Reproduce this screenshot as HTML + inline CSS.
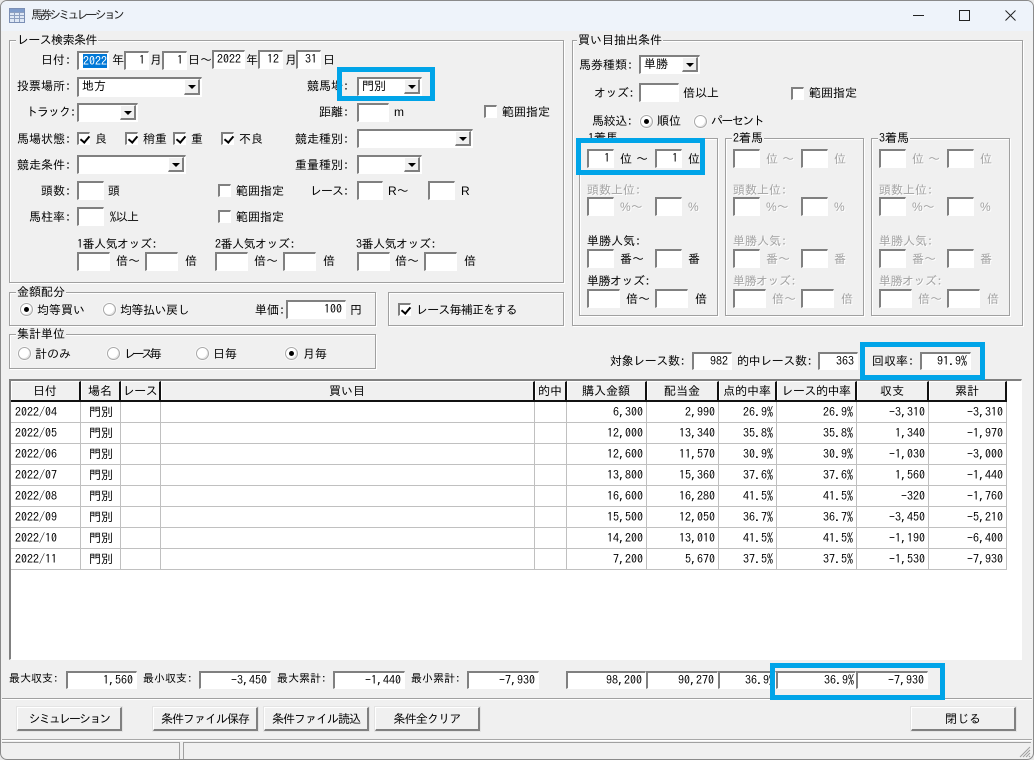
<!DOCTYPE html>
<html lang="ja"><head><meta charset="utf-8"><title>馬券シミュレーション</title>
<style>
html,body{margin:0;padding:0;width:1034px;height:760px;overflow:hidden;background:#e8e8e8}
*{box-sizing:border-box}
#w{position:absolute;left:0;top:0;width:1034px;height:760px;background:#f0f0f0;font:12px/14px "IPAGothic","Noto Sans CJK JP",sans-serif;color:#000;border:1px solid #8a8a8a;border-width:1px 1px 1px 1px;border-radius:7px 7px 7px 7px;overflow:hidden}
#in{position:absolute;left:-1px;top:-1px;width:1034px;height:760px}
#in div,#in span.t{position:absolute}
.t{white-space:nowrap;height:14px}
.d{color:#a2a2a2;text-shadow:1px 1px 0 #fff}
.n{letter-spacing:-.6px}
.f{font-family:"Liberation Sans",sans-serif}
.g{border:1px solid #a0a0a0;box-shadow:inset 1px 1px 0 #fff,1px 1px 0 #fff}
.l{background:#f0f0f0;padding:0 1px;white-space:nowrap;height:14px;line-height:14px}
.i{background:#fff;border-style:solid;border-width:2px 1px 1px 2px;border-color:#808080 #fff #fff #808080;text-align:right;padding-right:3px;line-height:14px;white-space:nowrap;overflow:hidden}
.c{background:#fff;border-style:solid;border-width:2px 1px 1px 2px;border-color:#808080 #fff #fff #808080;padding-left:3px;line-height:15px;white-space:nowrap}
.c i{position:absolute;right:1px;top:0;bottom:1px;width:16px;background:#f0f0f0;border-style:solid;border-width:1px 2px 2px 1px;border-color:#fff #808080 #808080 #fff}
.c i::after{content:"";position:absolute;left:3px;top:5px;border:4px solid transparent;border-top:4px solid #000;border-bottom:0}
.k{width:13px;height:13px;background:#fff;border-style:solid;border-width:2px 1px 1px 2px;border-color:#808080 #fff #fff #808080}
.k.x::after{content:"";position:absolute;left:3px;top:0;width:4px;height:7px;border-right:2px solid #000;border-bottom:2px solid #000;transform:rotate(40deg)}
.r{width:13px;height:13px;border-radius:50%;background:#fff;border:1px solid #a8a8a8;box-shadow:-1px -1px 0 #e4e4e4 inset,0 0 0 1px #f8f8f8}
.r.x::after{content:"";position:absolute;left:3px;top:3px;width:5px;height:5px;border-radius:50%;background:#000}
.b{background:#f0f0f0;border-style:solid;border-width:1px 2px 2px 1px;border-color:#fff #808080 #808080 #fff;box-shadow:0 0 0 1px #e4e4e4;text-align:center;line-height:22px;white-space:nowrap}
.h{border:5px solid #00a4e8;background:transparent;z-index:5}
table{position:absolute;left:11px;top:381px;border-collapse:separate;border-spacing:0;table-layout:fixed;width:995px;background:#fff}
th{height:21px;padding:0;font-weight:normal;background:#f0f0f0;border-right:2px solid #111;border-bottom:2px solid #111;border-top:1px solid #fff;white-space:nowrap;overflow:hidden;text-align:center;box-shadow:inset 1px 0 0 #fff}
td{height:21px;padding:0 3px 0 4px;border-right:1px solid #c0c0c0;border-bottom:1px solid #c0c0c0;text-align:right;white-space:nowrap;overflow:hidden}
td:nth-child(1){text-align:left}
td:nth-child(2){text-align:center}
</style></head><body>
<div id="w"><div id="in">
<div style="left:0;top:0;width:1034px;height:31px;background:#eef3fa"></div>
<svg style="position:absolute;left:9px;top:8px" width="16" height="15" viewBox="0 0 16 15"><rect x=".5" y=".5" width="15" height="14" fill="#dfe8f5" stroke="#7b8fb5"/><rect x="1" y="1" width="14" height="3" fill="#7f9ccb"/><path d="M1 4.500H15M1 7.500H15M1 10.500H15M5.500 4V14M10.500 4V14" stroke="#8d9fc0" fill="none"/></svg>
<span class="t" style="left:31px;top:8px;color:#222;letter-spacing:-2.900px">馬券シミュレーション</span>
<svg style="position:absolute;left:905px;top:5px" width="120" height="20" viewBox="0 0 120 20"><path d="M8 10.500H19M54.500 5.500H64.500V15.500H54.500ZM100.500 5.500L110.500 15.500M110.500 5.500L100.500 15.500" stroke="#222" fill="none"/></svg>

<div class="g" style="left:9px;top:40px;width:555px;height:243px"></div>
<div class="l n" style="left:16px;top:33px;">レース検索条件</div>
<span class="t" style="left:41px;top:53px">日付:</span>
<div class="i" style="left:77px;top:51px;width:32px;height:19px;padding-right:0"><span style="background:#0078d7;color:#fff;position:absolute;left:4px;top:1px;width:24px;height:14px;overflow:hidden">2022</span></div>
<span class="t" style="left:112px;top:53px">年</span>
<div class="i" style="left:124px;top:51px;width:25px;height:19px">1</div>
<span class="t" style="left:150px;top:53px">月</span>
<div class="i" style="left:162px;top:51px;width:25px;height:19px">1</div>
<span class="t" style="left:188px;top:53px">日～</span>
<div class="i" style="left:212px;top:50px;width:33px;height:19px">2022</div>
<span class="t" style="left:246px;top:53px">年</span>
<div class="i" style="left:258px;top:50px;width:25px;height:19px">12</div>
<span class="t" style="left:285px;top:53px">月</span>
<div class="i" style="left:296px;top:50px;width:25px;height:19px">31</div>
<span class="t" style="left:323px;top:53px">日</span>

<span class="t" style="left:17px;top:79px">投票場所:</span>
<div class="c" style="left:77px;top:77px;width:125px;height:20px">地方<i></i></div>
<span class="t" style="left:307px;top:79px">競馬場:</span>
<div class="c" style="left:357px;top:77px;width:65px;height:19px">門別<i></i></div>
<span class="t" style="left:26px;top:105px;letter-spacing:-1px">トラック:</span>
<div class="c" style="left:77px;top:103px;width:61px;height:19px"><i></i></div>
<span class="t" style="left:319px;top:105px">距離:</span>
<div class="i" style="left:357px;top:103px;width:32px;height:19px"></div>
<span class="t f" style="left:394px;top:105px">m</span>
<div class="k" style="left:484px;top:105px"></div>
<span class="t" style="left:502px;top:105px">範囲指定</span>

<span class="t" style="left:17px;top:132px">馬場状態:</span>
<div class="k x" style="left:77px;top:132px"></div><span class="t" style="left:95px;top:132px">良</span>
<div class="k x" style="left:125px;top:132px"></div><span class="t" style="left:143px;top:132px">稍重</span>
<div class="k x" style="left:173px;top:132px"></div><span class="t" style="left:191px;top:132px">重</span>
<div class="k x" style="left:221px;top:132px"></div><span class="t" style="left:239px;top:132px">不良</span>
<span class="t" style="left:295px;top:132px">競走種別:</span>
<div class="c" style="left:357px;top:129px;width:116px;height:19px"><i></i></div>

<span class="t" style="left:17px;top:158px">競走条件:</span>
<div class="c" style="left:77px;top:155px;width:109px;height:19px"><i></i></div>
<span class="t" style="left:295px;top:158px">重量種別:</span>
<div class="c" style="left:357px;top:155px;width:65px;height:19px"><i></i></div>

<span class="t" style="left:41px;top:184px">頭数:</span>
<div class="i" style="left:77px;top:181px;width:27px;height:19px"></div>
<span class="t" style="left:108px;top:184px">頭</span>
<div class="k" style="left:218px;top:184px"></div><span class="t" style="left:236px;top:184px">範囲指定</span>
<span class="t" style="left:310px;top:184px;letter-spacing:-1px">レース:</span>
<div class="i" style="left:357px;top:181px;width:26px;height:19px"></div>
<span class="t" style="left:388px;top:184px"><span class="f">R</span>～</span>
<div class="i" style="left:428px;top:181px;width:27px;height:19px"></div>
<span class="t f" style="left:461px;top:184px">R</span>

<span class="t" style="left:29px;top:210px">馬柱率:</span>
<div class="i" style="left:77px;top:207px;width:27px;height:19px"></div>
<span class="t" style="left:110px;top:210px;letter-spacing:-.5px">%以上</span>
<div class="k" style="left:218px;top:210px"></div><span class="t" style="left:236px;top:210px">範囲指定</span>

<span class="t" style="left:77px;top:237px;letter-spacing:-.5px">1番人気オッズ:</span>
<div class="i" style="left:77px;top:252px;width:33px;height:19px"></div>
<span class="t" style="left:116px;top:254px">倍～</span>
<div class="i" style="left:145px;top:252px;width:33px;height:19px"></div>
<span class="t" style="left:185px;top:254px">倍</span>
<span class="t" style="left:215px;top:237px;letter-spacing:-.5px">2番人気オッズ:</span>
<div class="i" style="left:215px;top:252px;width:33px;height:19px"></div>
<span class="t" style="left:254px;top:254px">倍～</span>
<div class="i" style="left:283px;top:252px;width:33px;height:19px"></div>
<span class="t" style="left:323px;top:254px">倍</span>
<span class="t" style="left:356px;top:237px;letter-spacing:-.5px">3番人気オッズ:</span>
<div class="i" style="left:357px;top:252px;width:33px;height:19px"></div>
<span class="t" style="left:395px;top:254px">倍～</span>
<div class="i" style="left:424px;top:252px;width:33px;height:19px"></div>
<span class="t" style="left:464px;top:254px">倍</span>

<div class="g" style="left:9px;top:292px;width:367px;height:34px"></div>
<div class="l" style="left:16px;top:285px;">金額配分</div>
<div class="r x" style="left:20px;top:303px"></div><span class="t" style="left:37px;top:303px">均等買い</span>
<div class="r" style="left:103px;top:303px"></div><span class="t" style="left:120px;top:303px;letter-spacing:-.5px">均等払い戻し</span>
<span class="t" style="left:255px;top:303px">単価:</span>
<div class="i" style="left:286px;top:300px;width:60px;height:19px">100</div>
<span class="t" style="left:350px;top:303px">円</span>

<div class="g" style="left:388px;top:292px;width:176px;height:34px"></div>
<div class="k x" style="left:398px;top:303px"></div><span class="t" style="left:416px;top:303px;letter-spacing:-.8px">レース毎補正をする</span>

<div class="g" style="left:9px;top:334px;width:367px;height:35px"></div>
<div class="l" style="left:16px;top:327px;">集計単位</div>
<div class="r" style="left:18px;top:347px"></div><span class="t" style="left:35px;top:347px">計のみ</span>
<div class="r" style="left:107px;top:347px"></div><span class="t" style="left:124px;top:347px;letter-spacing:-3.400px">レース毎</span>
<div class="r" style="left:196px;top:347px"></div><span class="t" style="left:213px;top:347px">日毎</span>
<div class="r x" style="left:285px;top:347px"></div><span class="t" style="left:303px;top:347px">月毎</span>

<div class="g" style="left:572px;top:40px;width:451px;height:286px"></div>
<div class="l" style="left:577px;top:33px;">買い目抽出条件</div>
<span class="t" style="left:579px;top:58px">馬券種類:</span>
<div class="c" style="left:639px;top:55px;width:61px;height:19px">単勝<i></i></div>
<span class="t" style="left:594px;top:86px;letter-spacing:-.5px">オッズ:</span>
<div class="i" style="left:639px;top:83px;width:40px;height:19px"></div>
<span class="t" style="left:683px;top:86px">倍以上</span>
<div class="k" style="left:791px;top:87px"></div><span class="t" style="left:809px;top:86px">範囲指定</span>
<span class="t" style="left:592px;top:114px;letter-spacing:-.4px">馬絞込:</span>
<div class="r x" style="left:640px;top:115px"></div><span class="t" style="left:657px;top:114px">順位</span>
<div class="r" style="left:694px;top:115px"></div><span class="t" style="left:711px;top:114px;letter-spacing:-1.600px">パーセント</span>

<div class="g" style="left:579px;top:138px;width:139px;height:178px"></div>
<div class="l" style="left:587px;top:131px;">1着馬</div>
<div class="i" style="left:587px;top:149px;width:27px;height:19px">1</div>
<span class="t" style="left:620px;top:152px">位</span><span class="t" style="left:636px;top:152px">～</span>
<div class="i" style="left:655px;top:149px;width:27px;height:19px">1</div>
<span class="t" style="left:688px;top:152px">位</span>
<span class="t d" style="left:587px;top:183px">頭数上位:</span>
<div class="i" style="left:587px;top:197px;width:27px;height:19px"></div>
<span class="t d" style="left:620px;top:200px"><span class="f">%</span>～</span>
<div class="i" style="left:655px;top:197px;width:27px;height:19px"></div>
<span class="t d f" style="left:688px;top:200px">%</span>
<span class="t" style="left:587px;top:234px">単勝人気:</span>
<div class="i" style="left:587px;top:249px;width:27px;height:19px"></div>
<span class="t" style="left:620px;top:252px">番～</span>
<div class="i" style="left:655px;top:249px;width:27px;height:19px"></div>
<span class="t" style="left:688px;top:252px">番</span>
<span class="t" style="left:587px;top:274px;letter-spacing:-.5px">単勝オッズ:</span>
<div class="i" style="left:587px;top:289px;width:33px;height:19px"></div>
<span class="t" style="left:626px;top:292px">倍～</span>
<div class="i" style="left:655px;top:289px;width:33px;height:19px"></div>
<span class="t" style="left:695px;top:292px">倍</span>

<div class="g" style="left:725px;top:138px;width:139px;height:178px"></div>
<div class="l" style="left:732px;top:131px;">2着馬</div>
<div class="i" style="left:733px;top:149px;width:27px;height:19px"></div>
<span class="t d" style="left:766px;top:152px">位</span><span class="t d" style="left:782px;top:152px">～</span>
<div class="i" style="left:801px;top:149px;width:27px;height:19px"></div>
<span class="t d" style="left:834px;top:152px">位</span>
<span class="t d" style="left:733px;top:183px">頭数上位:</span>
<div class="i" style="left:733px;top:197px;width:27px;height:19px"></div>
<span class="t d" style="left:766px;top:200px"><span class="f">%</span>～</span>
<div class="i" style="left:801px;top:197px;width:27px;height:19px"></div>
<span class="t d f" style="left:834px;top:200px">%</span>
<span class="t d" style="left:733px;top:234px">単勝人気:</span>
<div class="i" style="left:733px;top:249px;width:27px;height:19px"></div>
<span class="t d" style="left:766px;top:252px">番～</span>
<div class="i" style="left:801px;top:249px;width:27px;height:19px"></div>
<span class="t d" style="left:834px;top:252px">番</span>
<span class="t d" style="left:733px;top:274px;letter-spacing:-.5px">単勝オッズ:</span>
<div class="i" style="left:733px;top:289px;width:33px;height:19px"></div>
<span class="t d" style="left:772px;top:292px">倍～</span>
<div class="i" style="left:801px;top:289px;width:33px;height:19px"></div>
<span class="t d" style="left:841px;top:292px">倍</span>

<div class="g" style="left:871px;top:138px;width:139px;height:178px"></div>
<div class="l" style="left:878px;top:131px;">3着馬</div>
<div class="i" style="left:879px;top:149px;width:27px;height:19px"></div>
<span class="t d" style="left:912px;top:152px">位</span><span class="t d" style="left:928px;top:152px">～</span>
<div class="i" style="left:947px;top:149px;width:27px;height:19px"></div>
<span class="t d" style="left:980px;top:152px">位</span>
<span class="t d" style="left:879px;top:183px">頭数上位:</span>
<div class="i" style="left:879px;top:197px;width:27px;height:19px"></div>
<span class="t d" style="left:912px;top:200px"><span class="f">%</span>～</span>
<div class="i" style="left:947px;top:197px;width:27px;height:19px"></div>
<span class="t d f" style="left:980px;top:200px">%</span>
<span class="t d" style="left:879px;top:234px">単勝人気:</span>
<div class="i" style="left:879px;top:249px;width:27px;height:19px"></div>
<span class="t d" style="left:912px;top:252px">番～</span>
<div class="i" style="left:947px;top:249px;width:27px;height:19px"></div>
<span class="t d" style="left:980px;top:252px">番</span>
<span class="t d" style="left:879px;top:274px;letter-spacing:-.5px">単勝オッズ:</span>
<div class="i" style="left:879px;top:289px;width:33px;height:19px"></div>
<span class="t d" style="left:918px;top:292px">倍～</span>
<div class="i" style="left:947px;top:289px;width:33px;height:19px"></div>
<span class="t d" style="left:987px;top:292px">倍</span>

<span class="t" style="left:610px;top:354px;letter-spacing:-.4px">対象レース数:</span>
<div class="i" style="left:692px;top:352px;width:40px;height:18px">982</div>
<span class="t" style="left:737px;top:354px;letter-spacing:-.4px">的中レース数:</span>
<div class="i" style="left:818px;top:352px;width:40px;height:18px">363</div>
<span class="t" style="left:872px;top:354px">回収率:</span>
<div class="i" style="left:920px;top:352px;width:51px;height:18px">91.9%</div>

<div style="left:9px;top:379px;width:1013px;height:281px;background:#fff;border-style:solid;border-width:2px 1px 1px 2px;border-color:#808080 #fff #fff #808080"></div>
<table>
<colgroup><col style="width:70px"><col style="width:40px"><col style="width:40px"><col style="width:374px"><col style="width:32px"><col style="width:80px"><col style="width:72px"><col style="width:58px"><col style="width:80px"><col style="width:72px"><col style="width:78px"></colgroup>
<tr><th>日付</th><th>場名</th><th style="letter-spacing:-.6px">レース</th><th>買い目</th><th>的中</th><th>購入金額</th><th>配当金</th><th>点的中率</th><th style="letter-spacing:-.5px">レース的中率</th><th>収支</th><th>累計</th></tr>
<tr><td>2022/04</td><td>門別</td><td></td><td></td><td></td><td>6,300</td><td>2,990</td><td>26.9%</td><td>26.9%</td><td>-3,310</td><td>-3,310</td></tr>
<tr><td>2022/05</td><td>門別</td><td></td><td></td><td></td><td>12,000</td><td>13,340</td><td>35.8%</td><td>35.8%</td><td>1,340</td><td>-1,970</td></tr>
<tr><td>2022/06</td><td>門別</td><td></td><td></td><td></td><td>12,600</td><td>11,570</td><td>30.9%</td><td>30.9%</td><td>-1,030</td><td>-3,000</td></tr>
<tr><td>2022/07</td><td>門別</td><td></td><td></td><td></td><td>13,800</td><td>15,360</td><td>37.6%</td><td>37.6%</td><td>1,560</td><td>-1,440</td></tr>
<tr><td>2022/08</td><td>門別</td><td></td><td></td><td></td><td>16,600</td><td>16,280</td><td>41.5%</td><td>41.5%</td><td>-320</td><td>-1,760</td></tr>
<tr><td>2022/09</td><td>門別</td><td></td><td></td><td></td><td>15,500</td><td>12,050</td><td>36.7%</td><td>36.7%</td><td>-3,450</td><td>-5,210</td></tr>
<tr><td>2022/10</td><td>門別</td><td></td><td></td><td></td><td>14,200</td><td>13,010</td><td>41.5%</td><td>41.5%</td><td>-1,190</td><td>-6,400</td></tr>
<tr><td>2022/11</td><td>門別</td><td></td><td></td><td></td><td>7,200</td><td>5,670</td><td>37.5%</td><td>37.5%</td><td>-1,530</td><td>-7,930</td></tr>
</table>

<span class="t" style="left:9px;top:672px;font-size:11px">最大収支:</span>
<div class="i" style="left:66px;top:671px;width:71px;height:18px">1,560</div>
<span class="t" style="left:143px;top:672px;font-size:11px">最小収支:</span>
<div class="i" style="left:199px;top:671px;width:72px;height:18px">-3,450</div>
<span class="t" style="left:277px;top:672px;font-size:11px">最大累計:</span>
<div class="i" style="left:333px;top:671px;width:72px;height:18px">-1,440</div>
<span class="t" style="left:411px;top:672px;font-size:11px">最小累計:</span>
<div class="i" style="left:467px;top:671px;width:72px;height:18px">-7,930</div>
<div class="i" style="left:566px;top:671px;width:80px;height:18px">98,200</div>
<div class="i" style="left:646px;top:671px;width:72px;height:18px">90,270</div>
<div class="i" style="left:718px;top:671px;width:58px;height:18px;padding-right:0">36.9%</div>
<div class="i" style="left:776px;top:671px;width:80px;height:18px;padding-right:1px">36.9%</div>
<div class="i" style="left:856px;top:671px;width:72px;height:18px">-7,930</div>

<div style="left:2px;top:698px;width:1030px;height:2px;background:#a0a0a0;border-bottom:1px solid #fff"></div>
<div class="b" style="left:17px;top:707px;width:105px;height:24px;letter-spacing:-1.900px">シミュレーション</div>
<div class="b" style="left:153px;top:707px;width:105px;height:24px;letter-spacing:-1px">条件ファイル保存</div>
<div class="b" style="left:264px;top:707px;width:105px;height:24px;letter-spacing:-1px">条件ファイル読込</div>
<div class="b" style="left:375px;top:707px;width:105px;height:24px;letter-spacing:-.8px">条件全クリア</div>
<div class="b" style="left:911px;top:707px;width:105px;height:24px">閉じる</div>

<div style="left:2px;top:739px;width:1030px;height:2px;background:#a8a8a8;border-bottom:1px solid #fff"></div>
<div style="left:2px;top:742px;width:178px;height:17px;border-top:1px solid #a0a0a0;border-right:1px solid #a0a0a0"></div>
<div style="left:183px;top:742px;width:848px;height:17px;border-top:1px solid #a0a0a0;border-left:1px solid #a0a0a0"></div>
<svg style="position:absolute;left:1019px;top:746px" width="12" height="12" viewBox="0 0 12 12"><path d="M11 1L1 11M11 4L4 11M11 7L7 11M11 10L10 11" stroke="#a0a0a0" fill="none"/></svg>

<div class="h" style="left:337px;top:67px;width:98px;height:34px"></div>
<div class="h" style="left:576px;top:138px;width:129px;height:37px"></div>
<div class="h" style="left:860px;top:342px;width:125px;height:38px"></div>
<div class="h" style="left:770px;top:663px;width:175px;height:37px"></div>
</div></div>
</body></html>
